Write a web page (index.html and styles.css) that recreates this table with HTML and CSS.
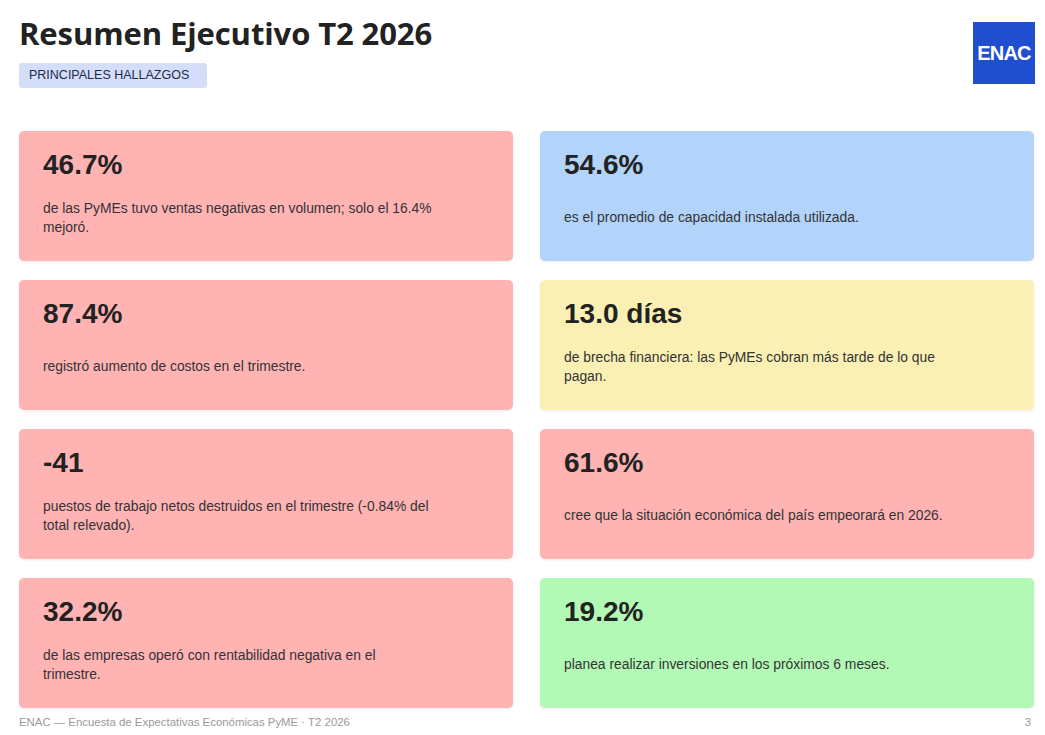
FILE: index.html
```html
<!DOCTYPE html>
<html lang="es">
<head>
<meta charset="utf-8">
<title>Resumen Ejecutivo T2 2026</title>
<link rel="stylesheet" href="styles.css">
</head>
<body>
<div class="page">
  <header class="header">
    <div class="header-text">
      <h1 class="title">Resumen Ejecutivo T2 2026</h1>
      <span class="badge">PRINCIPALES HALLAZGOS</span>
    </div>
    <div class="logo">ENAC</div>
  </header>

  <main class="grid">
    <div class="card red">
      <div class="num">46.7%</div>
      <div class="desc"><p>de las PyMEs tuvo ventas negativas en volumen; solo el 16.4% mejoró.</p></div>
    </div>
    <div class="card blue">
      <div class="num">54.6%</div>
      <div class="desc"><p>es el promedio de capacidad instalada utilizada.</p></div>
    </div>
    <div class="card red">
      <div class="num">87.4%</div>
      <div class="desc"><p>registró aumento de costos en el trimestre.</p></div>
    </div>
    <div class="card yellow">
      <div class="num">13.0 días</div>
      <div class="desc"><p>de brecha financiera: las PyMEs cobran más tarde de lo que pagan.</p></div>
    </div>
    <div class="card red">
      <div class="num">-41</div>
      <div class="desc"><p>puestos de trabajo netos destruidos en el trimestre (-0.84% del total relevado).</p></div>
    </div>
    <div class="card red">
      <div class="num">61.6%</div>
      <div class="desc"><p>cree que la situación económica del país empeorará en 2026.</p></div>
    </div>
    <div class="card red">
      <div class="num">32.2%</div>
      <div class="desc"><p>de las empresas operó con rentabilidad negativa en el trimestre.</p></div>
    </div>
    <div class="card green">
      <div class="num">19.2%</div>
      <div class="desc"><p>planea realizar inversiones en los próximos 6 meses.</p></div>
    </div>
  </main>

  <footer class="footer">
    <span>ENAC — Encuesta de Expectativas Económicas PyME · T2 2026</span>
    <span>3</span>
  </footer>
</div>
</body>
</html>
```

FILE: styles.css
```css
* { box-sizing: border-box; }

html, body {
  margin: 0;
  padding: 0;
  background: #ffffff;
}

body {
  font-family: "Liberation Sans", Arial, sans-serif;
  color: #222;
}

.page {
  width: 1045px;
  height: 735px;
  padding: 14px 11px 0 19px;
}

.header {
  display: flex;
  justify-content: space-between;
  align-items: flex-start;
}

.header-text {
  display: flex;
  flex-direction: column;
  align-items: flex-start;
}

.title {
  margin: 0;
  font-family: "Open Sans", "Noto Sans", sans-serif;
  font-weight: 700;
  font-size: 31px;
  line-height: 38px;
  color: #222;
  letter-spacing: -0.1px;
}

.badge {
  margin-top: 11px;
  display: inline-block;
  background: #d4defa;
  color: #1e2a4c;
  font-size: 12.5px;
  line-height: 25px;
  height: 25px;
  padding: 0 18px 0 10px;
  border-radius: 3px;
}

.logo {
  margin-top: 8px;
  margin-right: -1px;
  width: 62px;
  height: 62px;
  background: #1f4fcf;
  color: #ffffff;
  font-weight: 700;
  font-size: 20px;
  letter-spacing: -0.8px;
  display: flex;
  align-items: center;
  justify-content: center;
}

.grid {
  margin-top: 43px;
  display: grid;
  grid-template-columns: 1fr 1fr;
  grid-auto-rows: 130px;
  column-gap: 27px;
  row-gap: 19px;
}

.card {
  border-radius: 5px;
  padding: 18px 24px 0 24px;
  box-shadow: 0 1px 3px rgba(0, 0, 0, 0.08);
  display: flex;
  flex-direction: column;
}

.red { background: #ffb3b3; }
.blue { background: #b3d4fa; }
.yellow { background: #fbf0b3; }
.green { background: #b3f9b6; }

.num {
  font-size: 28px;
  line-height: 32px;
  font-weight: 700;
  color: #222;
}

.desc {
  margin-top: 9px;
  height: 56px;
  display: flex;
  align-items: center;
}

.desc p {
  margin: 0;
  max-width: 392px;
  font-size: 13.85px;
  line-height: 19.5px;
  color: #333;
}

.footer {
  margin-top: 8px;
  display: flex;
  justify-content: space-between;
  font-size: 11.4px;
  line-height: 13px;
  color: #999;
  padding-right: 3px;
}
```
